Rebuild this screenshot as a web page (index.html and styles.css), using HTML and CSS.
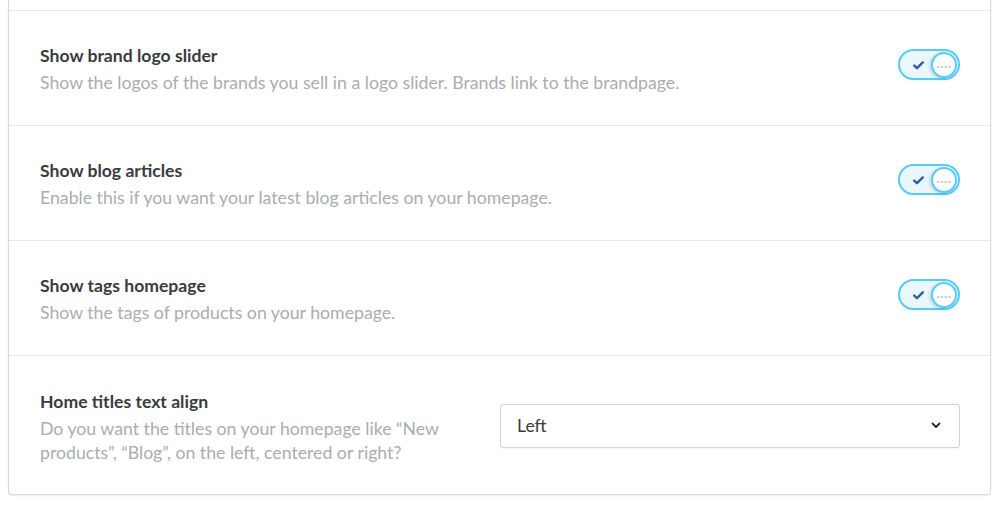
FILE: index.html
```html
<!DOCTYPE html>
<html>
<head>
<meta charset="utf-8">
<link rel="stylesheet" href="styles.css">
</head>
<body>
<div class="card">
  <div class="card-top"></div>
  <div class="row">
    <div class="text">
      <div class="title">Show brand logo slider</div>
      <div class="desc">Show the logos of the brands you sell in a logo slider. Brands link to the brandpage.</div>
    </div>
    <div class="toggle"><svg class="check" width="11" height="9" viewBox="0 0 11 9"><path d="M1.2 4.6 L4 7.2 L9.8 1.4" fill="none" stroke="#2d5fa5" stroke-width="2.4" stroke-linecap="round" stroke-linejoin="round"/></svg><span class="knob"><span class="dots">····</span></span></div>
  </div>
  <div class="row">
    <div class="text">
      <div class="title">Show blog articles</div>
      <div class="desc">Enable this if you want your latest blog articles on your homepage.</div>
    </div>
    <div class="toggle"><svg class="check" width="11" height="9" viewBox="0 0 11 9"><path d="M1.2 4.6 L4 7.2 L9.8 1.4" fill="none" stroke="#2d5fa5" stroke-width="2.4" stroke-linecap="round" stroke-linejoin="round"/></svg><span class="knob"><span class="dots">····</span></span></div>
  </div>
  <div class="row">
    <div class="text">
      <div class="title">Show tags homepage</div>
      <div class="desc">Show the tags of products on your homepage.</div>
    </div>
    <div class="toggle"><svg class="check" width="11" height="9" viewBox="0 0 11 9"><path d="M1.2 4.6 L4 7.2 L9.8 1.4" fill="none" stroke="#2d5fa5" stroke-width="2.4" stroke-linecap="round" stroke-linejoin="round"/></svg><span class="knob"><span class="dots">····</span></span></div>
  </div>
  <div class="row row-select">
    <div class="text">
      <div class="title">Home titles text align</div>
      <div class="desc">Do you want the titles on your homepage like “New products”, “Blog”, on the left, centered or right?</div>
    </div>
    <div class="select">
      <span class="select-value">Left</span>
      <svg class="chevron" width="10" height="7" viewBox="0 0 10 7"><path d="M1.5 1.5 L5 5 L8.5 1.5" fill="none" stroke="#333" stroke-width="2" stroke-linecap="round" stroke-linejoin="round"/></svg>
    </div>
  </div>
</div>
</body>
</html>
```
FILE: styles.css
```css
html, body {
  margin: 0;
  padding: 0;
  background: #fff;
}
body {
  font-family: Lato, "Open Sans", sans-serif;
  width: 1000px;
  height: 506px;
  overflow: hidden;
}
.card {
  margin-left: 8px;
  width: 981px;
  border: 1px solid #d6d9dc;
  border-top: none;
  border-radius: 0 0 4px 4px;
  box-shadow: 0 1px 2px rgba(0,0,0,0.08);
}
.card-top {
  height: 10px;
}
.row {
  display: flex;
  align-items: flex-start;
  justify-content: space-between;
  border-top: 1px solid #e6e8ea;
  padding: 33px 30px 30px 31px;
}
.row-select {
  align-items: center;
  gap: 40px;
  padding-top: 34px;
  padding-bottom: 29px;
}
.text {
  flex: 1;
}
.title {
  font-size: 17.6px;
  line-height: 24px;
  font-weight: 700;
  color: #3a3b3c;
}
.desc {
  margin-top: 3px;
  font-size: 17.7px;
  line-height: 24px;
  color: #a9adb0;
}
.toggle {
  margin-top: 5px;
  width: 44px;
  height: 27px;
  border: 2px solid #55ccf6;
  border-radius: 16px;
  background: #eaf8fe;
  display: flex;
  align-items: center;
  justify-content: space-between;
  padding: 0 1px 0 13px;
  box-sizing: content-box;
  box-shadow: 0 1px 2px rgba(0,0,0,0.06);
}
.check {
  display: block;
  margin-top: 1px;
}
.knob {
  width: 22px;
  height: 22px;
  border: 2px solid #55ccf6;
  border-radius: 50%;
  background: #fff;
  display: flex;
  align-items: center;
  justify-content: center;
  box-shadow: -2px 1px 3px rgba(0,0,0,0.12);
}
.dots {
  font-size: 12px;
  line-height: 10px;
  letter-spacing: 0.5px;
  color: #c3c6c9;
  font-weight: 700;
  margin-top: 2px;
}
.select {
  width: 424px;
  height: 42px;
  margin-top: -4px;
  border: 1px solid #cfd2d5;
  border-radius: 3px;
  display: flex;
  align-items: center;
  justify-content: space-between;
  padding: 0 18px 0 16px;
  box-sizing: content-box;
  box-shadow: 0 1px 1px rgba(0,0,0,0.04);
}
.select-value {
  font-size: 17.6px;
  color: #3a3b3c;
}
.chevron {
  display: block;
}
```
